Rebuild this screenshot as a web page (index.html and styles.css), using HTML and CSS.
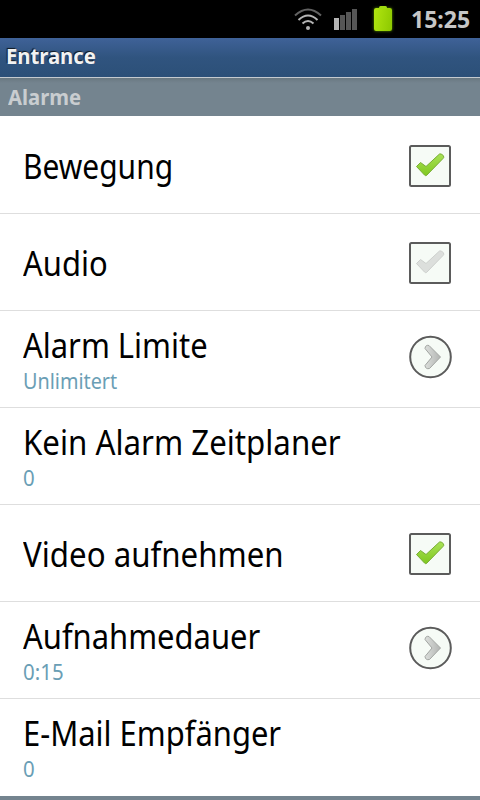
FILE: index.html
```html
<!DOCTYPE html>
<html lang="de">
<head>
    <meta charset="UTF-8">
    <meta name="viewport" content="width=device-width, initial-scale=1.0">
    <title>Entrance</title>
    <link rel="stylesheet" href="styles.css">
</head>
<body>
    <!-- Shared icons -->
    <svg class="icon-defs">
        <defs>
            <linearGradient id="green" x1="0" y1="0" x2="0" y2="1">
                <stop offset="0" stop-color="#a8e256"/>
                <stop offset="1" stop-color="#80c820"/>
            </linearGradient>
            <linearGradient id="grey" x1="0" y1="0" x2="1" y2="0">
                <stop offset="0" stop-color="#dcdfdc"/>
                <stop offset="1" stop-color="#b2b4b2"/>
            </linearGradient>
            <symbol id="tick" viewBox="0 0 44 44">
                <rect x="2" y="2" width="40" height="40" rx="1.5" fill="#f6fbf6" stroke="#5b5b5b" stroke-width="2"/>
                <path d="M8.5 22.5 L12.5 18.5 L18 22.5 L31.500 10 Q33.500 9 35.500 12 Q36.300 13.500 35 14.500 L18.500 31.500 Q17.500 32 16.500 31 Z" stroke-width="1" stroke-linejoin="round"/>
            </symbol>
            <symbol id="arrow" viewBox="0 0 44 44">
                <circle cx="22.500" cy="22" r="20.300" fill="#f6fbf6" stroke="#5b5b5b" stroke-width="2"/>
                <path d="M17 13.500 Q17.500 9.500 21 10.500 L32.500 22 L21.500 33.500 Q17.500 34.500 17 30.500 L24 22 Z" fill="url(#grey)" stroke="#a2a5a2" stroke-width="1" stroke-linejoin="round"/>
            </symbol>
        </defs>
    </svg>

    <div class="status-bar">
        <svg class="wifi" width="28" height="24" viewBox="0 0 28 24" fill="none" stroke-width="2">
            <path d="M1 7.500 Q14 -4.500 27 7.500" stroke="#626262"/>
            <path d="M4.500 12 Q14 3 23.500 12" stroke="#b5b5b5"/>
            <path d="M8.500 15.500 Q14 10.500 19.500 15.500" stroke="#b5b5b5"/>
            <circle cx="14" cy="20" r="2" fill="#b5b5b5"/>
        </svg>
        <svg class="signal" width="24" height="22" viewBox="0 0 24 22">
            <rect x="0" y="9" width="5" height="12" fill="#b5b5b5"/>
            <rect x="6" y="6" width="5" height="15" fill="#565656"/>
            <rect x="12" y="3" width="5" height="18" fill="#565656"/>
            <rect x="18" y="0" width="5" height="21" fill="#565656"/>
        </svg>
        <span class="battery"></span>
        <span class="clock">15:25</span>
    </div>
    <div class="title-bar"><span>Entrance</span></div>
    <div class="category"><span>Alarme</span></div>

    <div class="list">
        <div class="row single">
            <div class="text"><div class="title narrow">Bewegung</div></div>
            <svg class="widget checked"><use href="#tick"/></svg>
        </div>
        <div class="row single">
            <div class="text"><div class="title">Audio</div></div>
            <svg class="widget unchecked"><use href="#tick"/></svg>
        </div>
        <div class="row">
            <div class="text">
                <div class="title">Alarm Limite</div>
                <div class="summary narrow">Unlimitert</div>
            </div>
            <svg class="widget more"><use href="#arrow"/></svg>
        </div>
        <div class="row">
            <div class="text">
                <div class="title wide">Kein Alarm Zeitplaner</div>
                <div class="summary">0</div>
            </div>
        </div>
        <div class="row single">
            <div class="text"><div class="title wide">Video aufnehmen</div></div>
            <svg class="widget checked"><use href="#tick"/></svg>
        </div>
        <div class="row">
            <div class="text">
                <div class="title">Aufnahmedauer</div>
                <div class="summary">0:15</div>
            </div>
            <svg class="widget more"><use href="#arrow"/></svg>
        </div>
        <div class="row">
            <div class="text">
                <div class="title">E-Mail Empfänger</div>
                <div class="summary">0</div>
            </div>
        </div>
    </div>
    <div class="next-category"></div>
</body>
</html>
```
FILE: styles.css
```css
body {
    margin: 0;
    height: 800px;
    overflow: hidden;
    background-color: #fff;
    font-family: "Noto Sans", "Open Sans", sans-serif;
}
.icon-defs {
    display: block;
    width: 0;
    height: 0;
}
.status-bar {
    height: 38px;
    display: flex;
    align-items: flex-start;
    background-color: #000;
}
.wifi {
    margin: 8px 0 0 294px;
}
.signal {
    margin: 9px 0 0 12px;
}
.battery {
    width: 18px;
    height: 23px;
    margin: 8px 0 0 16px;
    border-radius: 2px;
    background: linear-gradient(100deg, #b2e610, #8cc800);
    box-shadow: 0 0 3px #5e9800;
}
.battery::before {
    content: "";
    display: block;
    width: 8px;
    height: 3px;
    margin: -2px auto 0;
    border-radius: 2px;
    background-color: #9fda10;
}
.clock {
    margin-left: 19px;
    line-height: 38px;
    font-size: 24px;
    font-weight: bold;
    color: #c6c6c6;
    transform: scaleX(0.96);
    transform-origin: left;
}
.title-bar {
    box-sizing: border-box;
    height: 40px;
    padding-left: 6px;
    border-bottom: 1px solid #c5cbd0;
    background: linear-gradient(#3f6298, #30547f 50%, #2c5078);
    color: #f2f2f2;
    font-size: 21px;
    font-weight: bold;
    line-height: 37px;
    text-shadow: -1px -1px 1px #101820;
}
.title-bar span,
.category span {
    display: inline-block;
    transform: scaleX(0.965);
    transform-origin: left;
}
.category {
    height: 38px;
    padding-left: 8px;
    background: linear-gradient(#697881, #74848f 5px);
    color: #c9cdd0;
    font-size: 21px;
    font-weight: bold;
    line-height: 38px;
}
.row {
    box-sizing: border-box;
    display: flex;
    align-items: center;
    justify-content: space-between;
    height: 97px;
    padding: 1px 28px 0 23px;
    border-bottom: 1px solid #dedede;
}
.row.single {
    padding-top: 2px;
}
.row:first-child {
    height: 98px;
}
.row:last-child {
    border-bottom: none;
}
.text {
    white-space: nowrap;
}
.title {
    font-size: 34px;
    line-height: 40px;
    color: #000;
    transform: scaleX(0.91);
    transform-origin: left;
}
.summary {
    font-size: 22px;
    line-height: 30px;
    color: #6a9eb5;
    transform: scaleX(0.93);
    transform-origin: left;
}
.title.wide {
    transform: scaleX(0.919);
}
.title.narrow {
    transform: scaleX(0.881);
}
.summary.narrow {
    transform: scaleX(0.9);
}
.widget {
    width: 44px;
    height: 44px;
}
.checked {
    fill: url(#green);
    stroke: #78ad35;
}
.unchecked {
    fill: #dcdfdc;
    stroke: #cdd0cd;
}
.more {
    margin-bottom: 5px;
}
.next-category {
    height: 4px;
    background-color: #74848f;
}
```
